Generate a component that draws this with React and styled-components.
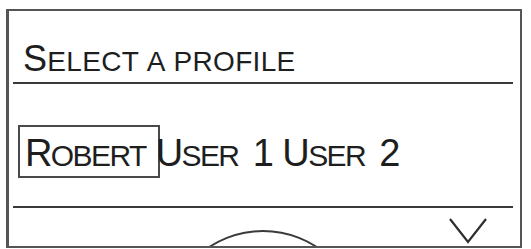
import React from 'react';
import styled, { createGlobalStyle } from 'styled-components';

const GlobalStyle = createGlobalStyle`
  html, body {
    margin: 0;
    padding: 0;
    background: #ffffff;
  }
  body {
    font-family: "Liberation Sans", Arial, sans-serif;
    color: #1e1e1e;
  }
`;

const Frame = styled.div`
  margin: 9px 0 0 6px;
  width: 516px;
  height: 239px;
  box-sizing: border-box;
  border: 2px solid #555;
  border-left-width: 3px;
  padding: 0 7px 0 4px;
  display: flex;
  flex-direction: column;
  overflow: hidden;
`;

const Header = styled.div`
  height: 73px;
  box-sizing: border-box;
  border-bottom: 2px solid #3a3a3a;
  display: flex;
  align-items: flex-end;
  padding: 0 0 5px 10px;
`;

const Caps = styled.span`
  font-size: ${p => p.$size}px;
  line-height: 1;
  letter-spacing: ${p => p.$spacing || 0}px;
  word-spacing: ${p => p.$wordSpacing || 0}px;
`;

const Rest = styled(Caps)`
  text-transform: uppercase;
`;

const Title = styled.h1`
  margin: 0;
  font-weight: normal;
  line-height: 1;
  white-space: pre;
`;

const ProfileRow = styled.div`
  height: 124px;
  box-sizing: border-box;
  border-bottom: 2px solid #3a3a3a;
  display: flex;
  align-items: center;
  gap: 10px;
  padding: 16px 0 0 12px;
`;

const Profile = styled.div`
  position: relative;
  line-height: 1;
  white-space: pre;

  ${p => p.$selected && `
    &::before {
      content: '';
      position: absolute;
      left: -7px;
      top: -9px;
      width: 142px;
      height: 53px;
      box-sizing: border-box;
      border: 2px solid #4a4a4a;
    }
  `}
`;

const Footer = styled.div`
  flex: 1;
  position: relative;
  display: flex;
  justify-content: flex-end;
  align-items: flex-start;
  padding: 9px 25px 0 0;
`;

const Dial = styled.svg`
  position: absolute;
  left: 180px;
  top: 11px;
`;

function SmallCaps({ text, big, small, spacing, wordSpacing }) {
  const words = text.split(' ');
  return words.map((w, i) => (
    <React.Fragment key={i}>
      {i > 0 && <Rest $size={small} $wordSpacing={wordSpacing}> </Rest>}
      {/^[A-Z0-9]/.test(w[0]) ? <Caps $size={big} $spacing={spacing}>{w[0]}</Caps> : <Rest $size={small} $spacing={spacing}>{w[0]}</Rest>}
      <Rest $size={small} $spacing={spacing}>{w.slice(1)}</Rest>
    </React.Fragment>
  ));
}

const profiles = ['Robert', 'User 1', 'User 2'];

export default function App() {
  return (
    <>
      <GlobalStyle />
      <Frame>
        <Header>
          <Title>
            <SmallCaps text="Select a profile" big={36} small={28} spacing={0.3} />
          </Title>
        </Header>
        <ProfileRow>
          {profiles.map((p, i) => (
            <Profile key={p} $selected={i === 0}>
              <SmallCaps text={p} big={38} small={30} spacing={-1.6} wordSpacing={6} />
            </Profile>
          ))}
        </ProfileRow>
        <Footer>
          <Dial width="140" height="40" viewBox="0 0 140 40">
            <circle cx="70" cy="110" r="98" fill="none" stroke="#3a3a3a" strokeWidth="2" />
          </Dial>
          <svg width="40" height="27" viewBox="0 0 40 27">
            <polyline points="2,2 20,25 38,2" fill="none" stroke="#2e2e2e" strokeWidth="2.2" />
          </svg>
        </Footer>
      </Frame>
    </>
  );
}
